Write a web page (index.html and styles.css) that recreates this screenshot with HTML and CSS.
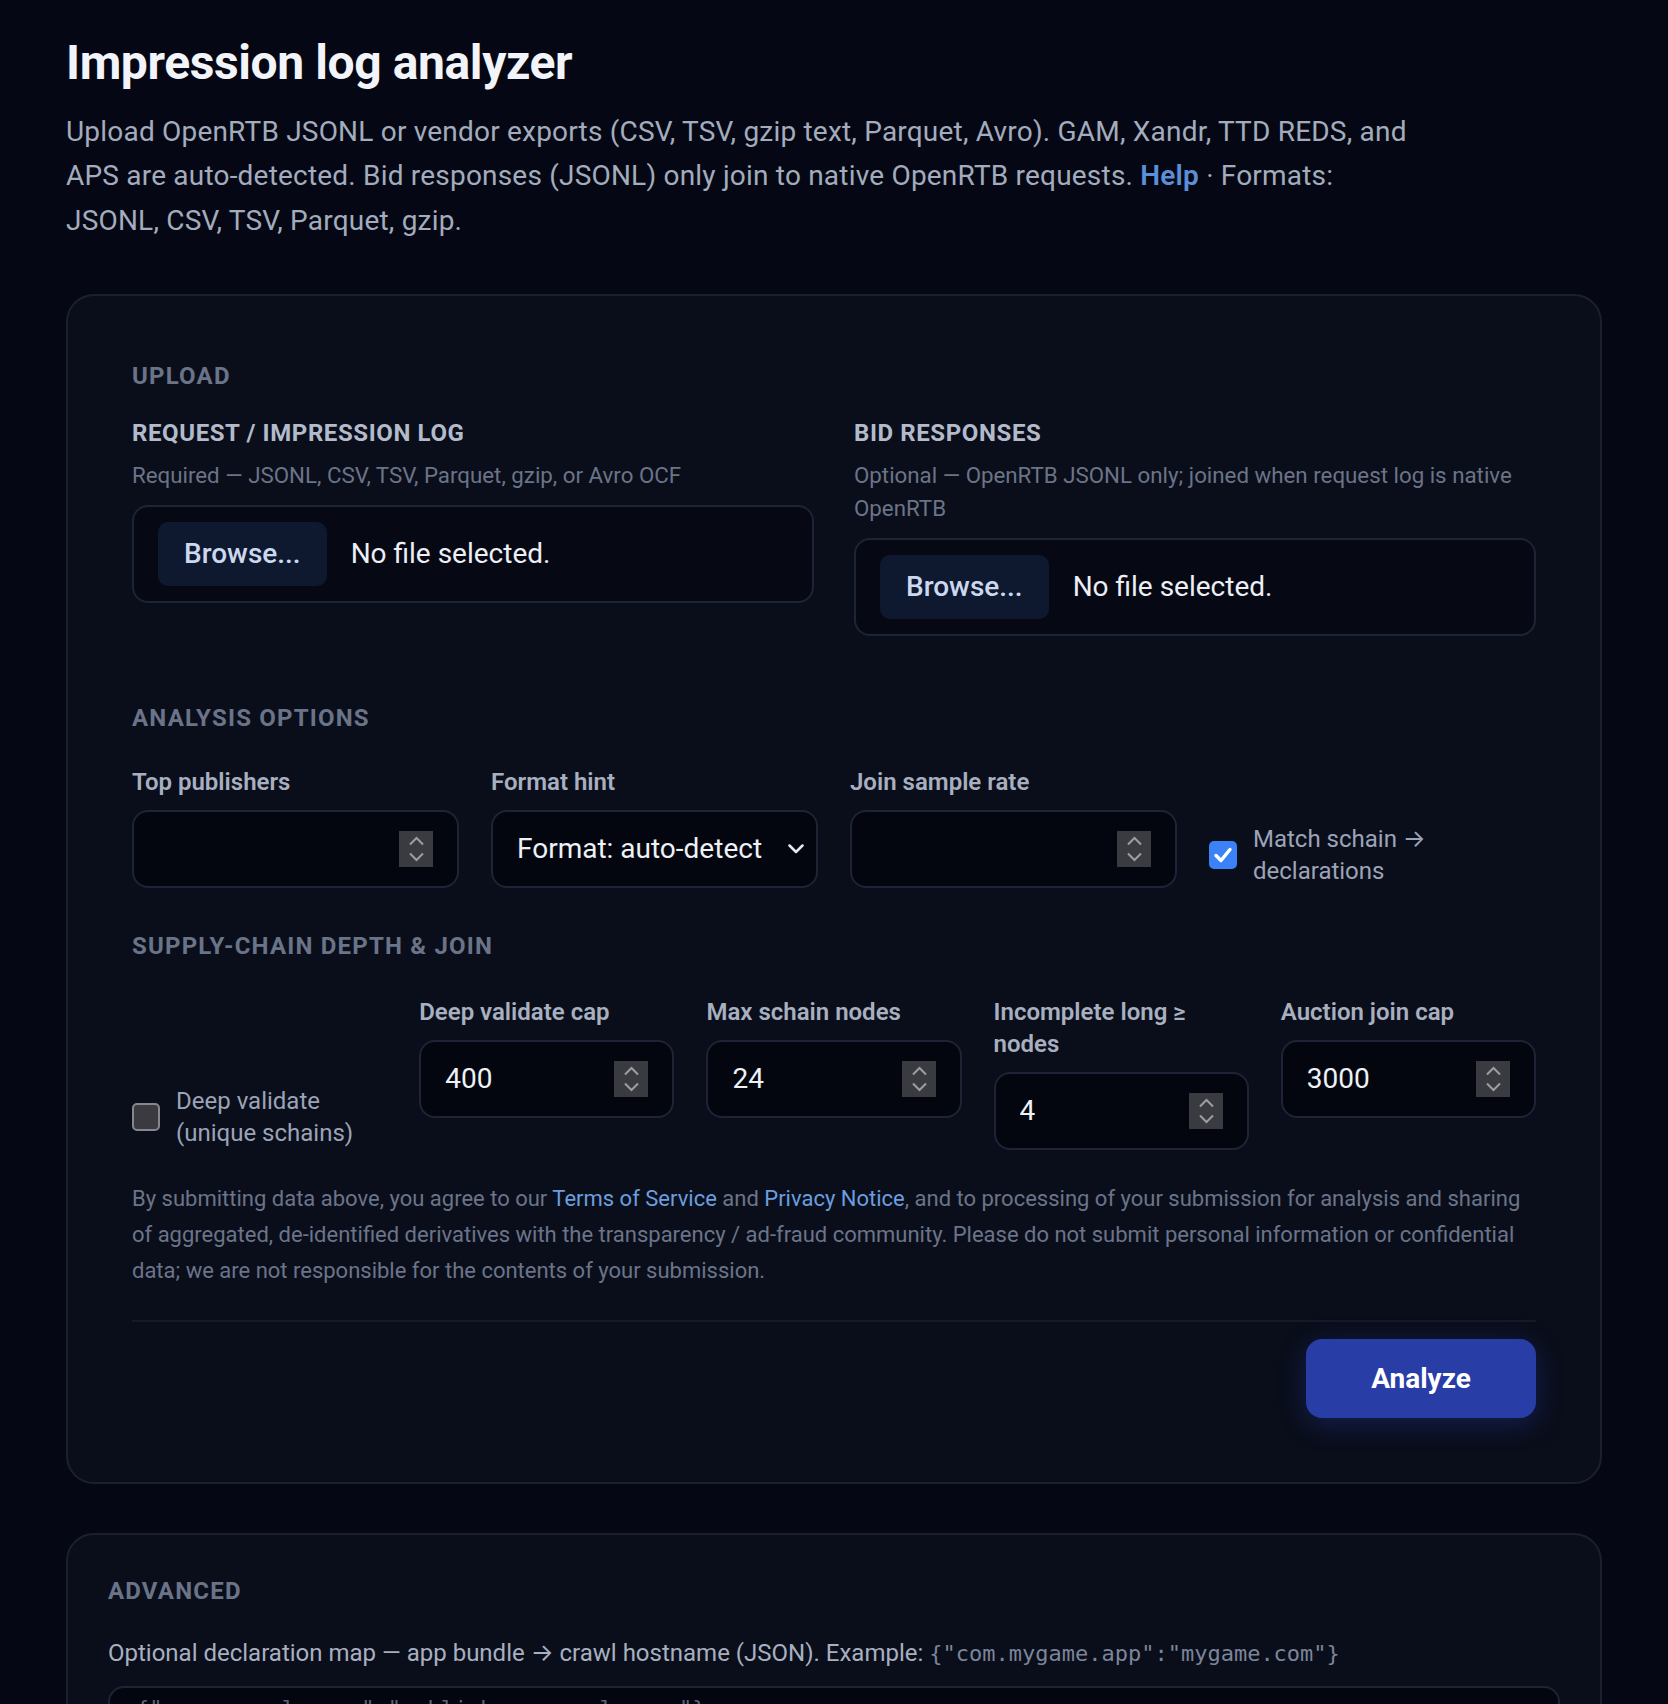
FILE: index.html
```html
<!DOCTYPE html>
<html lang="en">
<head>
  <meta charset="UTF-8">
  <meta name="viewport" content="width=device-width, initial-scale=1.0">
  <title>Impression log analyzer</title>
  <link rel="stylesheet" href="styles.css">
</head>
<body>
  <main class="page">
    <header class="intro">
      <h1>Impression log analyzer</h1>
      <p>Upload OpenRTB JSONL or vendor exports (CSV, TSV, gzip text, Parquet, Avro). GAM, Xandr, TTD REDS, and APS are auto-detected. Bid responses (JSONL) only join to native OpenRTB requests. <a href="#help">Help</a> · Formats: JSONL, CSV, TSV, Parquet, gzip.</p>
    </header>

    <!-- Main upload form -->
    <form class="card" id="analyzeForm">
      <h2 class="section-title">Upload</h2>
      <div class="upload-grid">
        <div class="upload-field">
          <h3>Request / impression log</h3>
          <p class="hint">Required — JSONL, CSV, TSV, Parquet, gzip, or Avro OCF</p>
          <label class="file-box">
            <input type="file" class="file-input">
            <span class="browse">Browse...</span>
            <span class="file-name">No file selected.</span>
          </label>
        </div>
        <div class="upload-field">
          <h3>Bid responses</h3>
          <p class="hint">Optional — OpenRTB JSONL only; joined when request log is native OpenRTB</p>
          <label class="file-box">
            <input type="file" class="file-input">
            <span class="browse">Browse...</span>
            <span class="file-name">No file selected.</span>
          </label>
        </div>
      </div>

      <h2 class="section-title">Analysis options</h2>
      <div class="options-grid">
        <div class="field">
          <label for="topPublishers">Top publishers</label>
          <div class="input-box">
            <input type="number" id="topPublishers">
            <span class="spinner"><svg width="34" height="36" viewBox="0 0 34 36"><path d="M11 13.5L17.5 7L24 13.5M11 22.5L17.5 29L24 22.5"/></svg></span>
          </div>
        </div>
        <div class="field">
          <label for="formatHint">Format hint</label>
          <div class="input-box select-box">
            <select id="formatHint">
              <option>Format: auto-detect</option>
              <option>Format: JSONL</option>
              <option>Format: CSV</option>
            </select>
            <svg class="chevron" width="16" height="10" viewBox="0 0 16 10"><path d="M1.5 1.5L8 8L14.5 1.5"/></svg>
          </div>
        </div>
        <div class="field">
          <label for="sampleRate">Join sample rate</label>
          <div class="input-box">
            <input type="number" id="sampleRate">
            <span class="spinner"><svg width="34" height="36" viewBox="0 0 34 36"><path d="M11 13.5L17.5 7L24 13.5M11 22.5L17.5 29L24 22.5"/></svg></span>
          </div>
        </div>
        <label class="check">
          <span class="box on"><svg width="28" height="28" viewBox="0 0 28 28"><path d="M7 14.5L12 19.5L21 8.5"/></svg></span>
          <span>Match schain <span class="arrow">→</span> declarations</span>
        </label>
      </div>

      <h2 class="section-title">Supply-chain depth &amp; join</h2>
      <div class="depth-grid">
        <label class="check">
          <span class="box off"></span>
          <span>Deep validate (unique schains)</span>
        </label>
        <div class="field">
          <label for="deepCap">Deep validate cap</label>
          <div class="input-box">
            <input type="number" id="deepCap" value="400">
            <span class="spinner"><svg width="34" height="36" viewBox="0 0 34 36"><path d="M11 13.5L17.5 7L24 13.5M11 22.5L17.5 29L24 22.5"/></svg></span>
          </div>
        </div>
        <div class="field">
          <label for="maxNodes">Max schain nodes</label>
          <div class="input-box">
            <input type="number" id="maxNodes" value="24">
            <span class="spinner"><svg width="34" height="36" viewBox="0 0 34 36"><path d="M11 13.5L17.5 7L24 13.5M11 22.5L17.5 29L24 22.5"/></svg></span>
          </div>
        </div>
        <div class="field">
          <label for="incompleteLong">Incomplete long ≥ nodes</label>
          <div class="input-box">
            <input type="number" id="incompleteLong" value="4">
            <span class="spinner"><svg width="34" height="36" viewBox="0 0 34 36"><path d="M11 13.5L17.5 7L24 13.5M11 22.5L17.5 29L24 22.5"/></svg></span>
          </div>
        </div>
        <div class="field">
          <label for="joinCap">Auction join cap</label>
          <div class="input-box">
            <input type="number" id="joinCap" value="3000">
            <span class="spinner"><svg width="34" height="36" viewBox="0 0 34 36"><path d="M11 13.5L17.5 7L24 13.5M11 22.5L17.5 29L24 22.5"/></svg></span>
          </div>
        </div>
      </div>

      <p class="legal">By submitting data above, you agree to our <a href="#terms">Terms of Service</a> and <a href="#privacy">Privacy Notice</a>, and to processing of your submission for analysis and sharing of aggregated, de-identified derivatives with the transparency / ad-fraud community. Please do not submit personal information or confidential data; we are not responsible for the contents of your submission.</p>

      <div class="actions">
        <button type="button" class="analyze">Analyze</button>
      </div>
    </form>

    <!-- Advanced -->
    <section class="card advanced">
      <h2 class="section-title">Advanced</h2>
      <p class="adv-text">Optional declaration map — app bundle <span class="arrow">→</span> crawl hostname (JSON). Example: <code>{"com.mygame.app":"mygame.com"}</code></p>
      <textarea rows="4" placeholder='{"com.example.app":"publisher.example.com"}'></textarea>
    </section>
  </main>
</body>
</html>
```

FILE: styles.css
```css
* {
  box-sizing: border-box;
}
body {
  margin: 0;
  background-color: #050814;
  color: #a3acbd;
  font-family: Roboto, "Liberation Sans", sans-serif;
}
.page {
  max-width: 1536px;
  margin: 0 auto;
  padding-top: 34px;
}
.intro h1 {
  margin: 0;
  font-size: 48px;
  line-height: 57.6px;
  font-weight: 700;
  letter-spacing: -0.4px;
  color: #f2f4f9;
}
.intro p {
  margin: 18px 0 0;
  max-width: 1345px;
  font-size: 28px;
  line-height: 44.8px;
  letter-spacing: 0.2px;
  color: #a3acbd;
}
.intro a {
  color: #5b90d8;
  font-weight: 600;
  text-decoration: none;
}
.arrow {
  font-family: Inter, "DejaVu Sans", sans-serif;
}
.card {
  margin-top: 50px;
  padding: 64px;
  background-color: #0a0e1b;
  border: 2px solid #1b2031;
  border-radius: 28px;
}
.section-title {
  margin: 0;
  font-size: 24px;
  line-height: 32px;
  font-weight: 700;
  letter-spacing: 1.2px;
  text-transform: uppercase;
  color: #6a7488;
}

/* upload */
.upload-grid {
  display: grid;
  grid-template-columns: repeat(2, minmax(0, 1fr));
  gap: 40px;
  margin: 25px 0 66px;
}
.upload-field h3 {
  margin: 0;
  font-size: 24px;
  line-height: 32px;
  font-weight: 700;
  letter-spacing: 0.6px;
  text-transform: uppercase;
  color: #b3bbca;
}
.hint {
  margin: 10px 0 13px;
  font-size: 22.3px;
  line-height: 33px;
  color: #6b7487;
}
.file-box {
  display: flex;
  align-items: center;
  gap: 24px;
  padding: 15px 24px;
  background-color: #060914;
  border: 2px solid #1e2335;
  border-radius: 16px;
  cursor: pointer;
}
.file-input {
  display: none;
}
.browse {
  display: flex;
  align-items: center;
  height: 64px;
  padding: 0 26px;
  background-color: #0e1930;
  border-radius: 10px;
  color: #cbd8ef;
  font-size: 28px;
  font-weight: 500;
}
.file-name {
  font-size: 28px;
  color: #eceff5;
}

/* fields */
.options-grid {
  display: grid;
  grid-template-columns: repeat(4, minmax(0, 1fr));
  gap: 32px;
  margin: 32px 0 42px;
}
.depth-grid {
  display: grid;
  grid-template-columns: repeat(5, minmax(0, 1fr));
  gap: 32px;
  margin-top: 34px;
  align-items: start;
}
.field {
  min-width: 0;
}
.field label {
  display: block;
  margin-bottom: 12px;
  font-size: 24px;
  line-height: 32px;
  font-weight: 600;
  color: #a8b0c0;
}
.input-box {
  display: flex;
  align-items: center;
  height: 78px;
  padding: 0 24px;
  background-color: #04060f;
  border: 2px solid #1e2335;
  border-radius: 16px;
}
.input-box input,
.input-box select {
  flex: 1;
  width: 100%;
  min-width: 0;
  padding: 0;
  background: none;
  border: none;
  outline: none;
  color: #eef1f6;
  font-family: inherit;
  font-size: 28px;
  -moz-appearance: textfield;
  appearance: none;
}
.input-box input::-webkit-inner-spin-button,
.input-box input::-webkit-outer-spin-button {
  -webkit-appearance: none;
  margin: 0;
}
.select-box {
  padding-right: 12px;
}
.select-box option {
  background-color: #0a0e1b;
}
.spinner {
  flex: none;
  display: block;
  width: 34px;
  height: 36px;
  background-color: #3a3a41;
}
.spinner svg {
  display: block;
  fill: none;
  stroke: #9d9da5;
  stroke-width: 2;
}
.chevron {
  flex: none;
  fill: none;
  stroke: #e5e8ef;
  stroke-width: 2.5;
  stroke-linecap: round;
  stroke-linejoin: round;
}

/* checkboxes */
.check {
  align-self: end;
  display: flex;
  align-items: center;
  gap: 16px;
  font-size: 24px;
  line-height: 32.5px;
  color: #9ba4b6;
}
.box {
  flex: none;
  width: 28px;
  height: 28px;
  border-radius: 5px;
}
.box.on {
  background-color: #3b82f6;
}
.box.on svg {
  display: block;
  fill: none;
  stroke: #fff;
  stroke-width: 3.5;
  stroke-linecap: round;
  stroke-linejoin: round;
}
.box.off {
  background-color: #3a3a40;
  border: 2px solid #86878e;
}

/* legal + submit */
.legal {
  margin: 31px 0 0;
  font-size: 22px;
  line-height: 36px;
  color: #6b7489;
}
.legal a {
  color: #6a9edf;
  text-decoration: none;
}
.actions {
  display: flex;
  justify-content: flex-end;
  margin-top: 31px;
  padding-top: 17px;
  border-top: 2px solid #151a28;
}
.analyze {
  width: 230px;
  height: 79px;
  background-color: #283da6;
  border: none;
  border-radius: 16px;
  color: #fff;
  font-family: inherit;
  font-size: 28px;
  font-weight: 700;
  cursor: pointer;
  box-shadow: 0 6px 26px rgba(40, 64, 180, 0.35);
}
.analyze:hover {
  background-color: #2f47bd;
}

/* advanced */
.advanced {
  margin-top: 49px;
  padding: 40px;
}
.adv-text {
  margin: 30px 0 16px;
  font-size: 24px;
  line-height: 32px;
  color: #a8b0c0;
}
.adv-text code {
  font-family: "DejaVu Sans Mono", "Liberation Mono", monospace;
  font-size: 22px;
  color: #7b8599;
}
.advanced textarea {
  display: block;
  width: 100%;
  padding: 6px 26px 12px;
  background-color: #04060f;
  border: 2px solid #1e2335;
  border-radius: 16px;
  color: #eef1f6;
  font-family: "DejaVu Sans Mono", "Liberation Mono", monospace;
  font-size: 22px;
  line-height: 30px;
  resize: vertical;
}
.advanced textarea::placeholder {
  color: #5d6579;
}
```
